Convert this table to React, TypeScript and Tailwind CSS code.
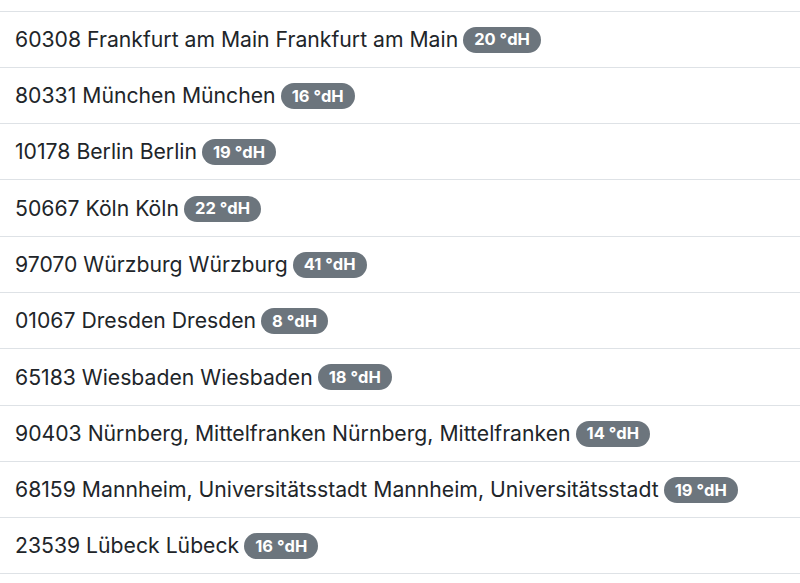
import React from "react";

interface Place {
  zip: string;
  name: string;
  hardness: number;
}

const places: Place[] = [
  { zip: "60308", name: "Frankfurt am Main", hardness: 20 },
  { zip: "80331", name: "München", hardness: 16 },
  { zip: "10178", name: "Berlin", hardness: 19 },
  { zip: "50667", name: "Köln", hardness: 22 },
  { zip: "97070", name: "Würzburg", hardness: 41 },
  { zip: "01067", name: "Dresden", hardness: 8 },
  { zip: "65183", name: "Wiesbaden", hardness: 18 },
  { zip: "90403", name: "Nürnberg, Mittelfranken", hardness: 14 },
  { zip: "68159", name: "Mannheim, Universitätsstadt", hardness: 19 },
  { zip: "23539", name: "Lübeck", hardness: 16 },
];

const App: React.FC = () => {
  return (
    <div className="w-[800px] h-[583px] overflow-hidden bg-white text-[#212529] font-['Inter',sans-serif]">
      <div className="h-[11.5px] border-b border-[#dee2e6]" />
      <ul>
        {places.map((p) => (
          <li
            key={p.zip}
            className="h-[56.3px] box-border border-b border-[#dee2e6] pl-[15px] pt-[1px] flex items-center text-[21.2px]"
          >
            <span>
              {p.zip} {p.name} {p.name}
            </span>
            <span className="ml-[5px] inline-flex items-center h-[26px] px-[11px] rounded-full bg-[#6c757d] text-white text-[16.5px] font-bold">
              {p.hardness} °dH
            </span>
          </li>
        ))}
      </ul>
    </div>
  );
};

export default App;
